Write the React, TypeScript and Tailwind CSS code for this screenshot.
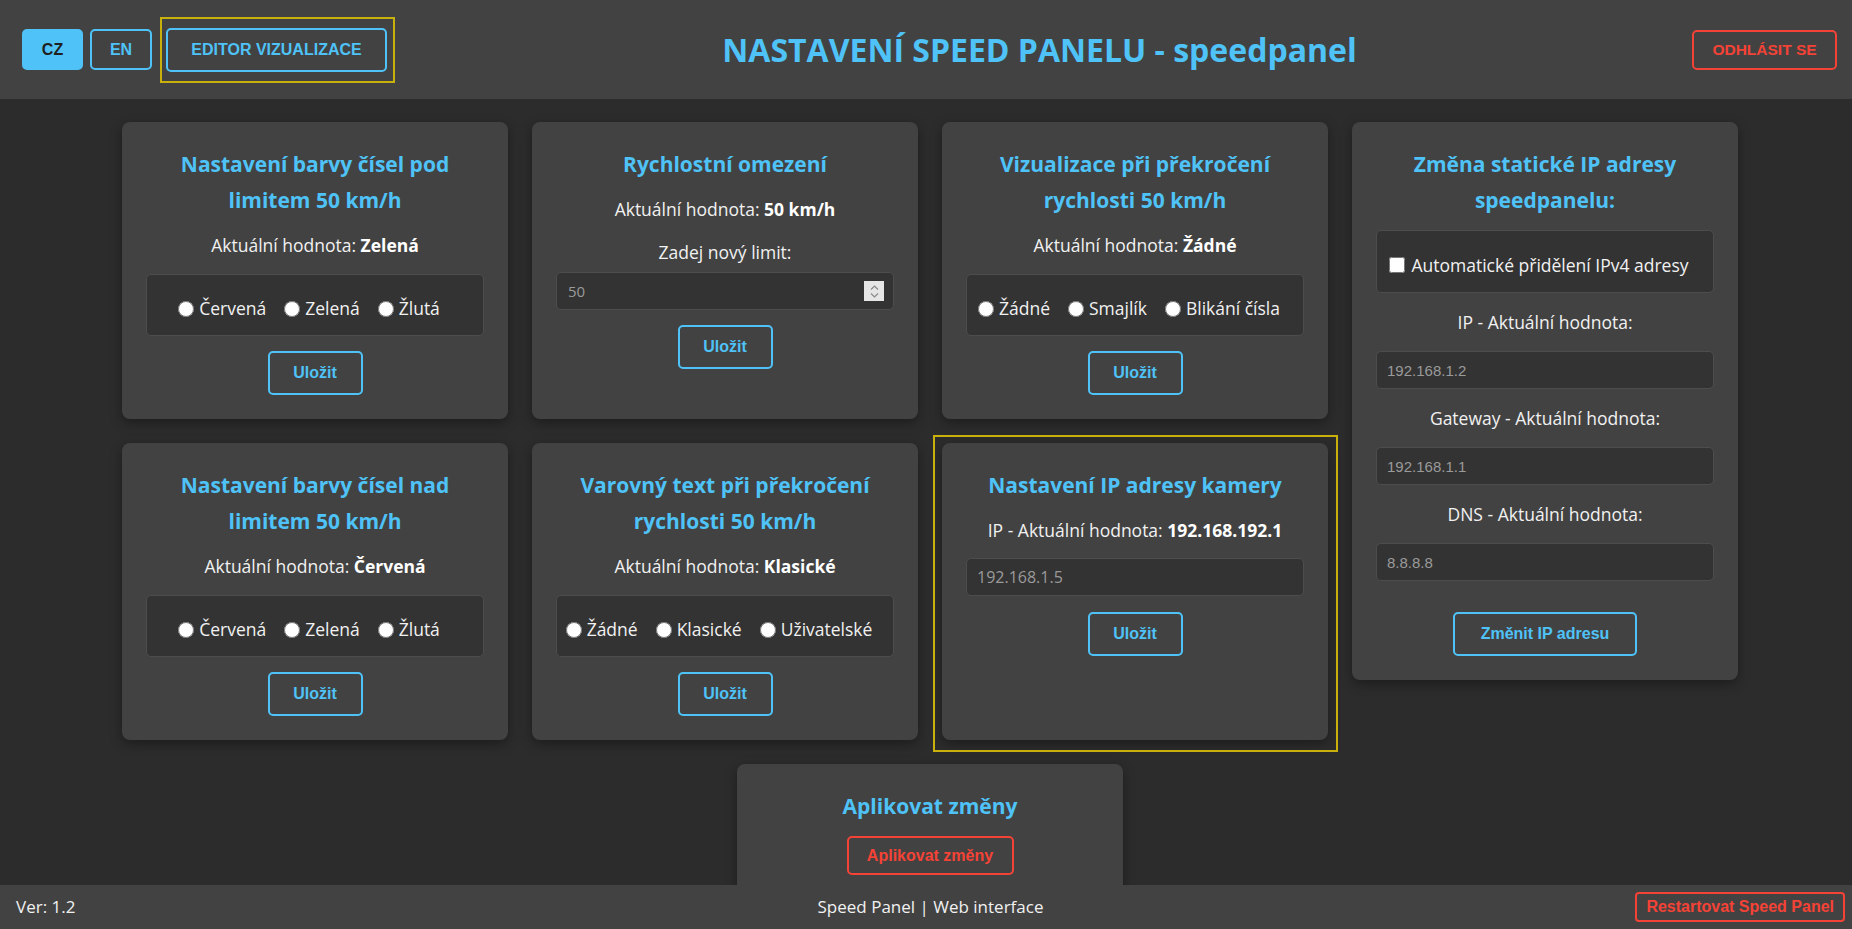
import React from 'react';

function Card({ children, className = '' }: { children: React.ReactNode; className?: string }) {
  return (
    <section
      className={`relative flex flex-col items-center rounded-lg bg-[#424242] p-6 text-center shadow-[0_4px_12px_rgba(0,0,0,0.35)] ${className}`}
    >
      {children}
    </section>
  );
}

function CardTitle({ children }: { children: React.ReactNode }) {
  return <h2 className="text-[21px] font-bold leading-[36px] text-[#4fc3f7]">{children}</h2>;
}

function Text({ children, className = '' }: { children: React.ReactNode; className?: string }) {
  return <p className={`text-[17.5px] leading-[27px] text-[#f1f1f1] ${className}`}>{children}</p>;
}

function RadioGroup({ name, options }: { name: string; options: string[] }) {
  return (
    <div className="mt-[15px] flex h-[62px] w-full items-center justify-center gap-[18px] rounded-[5px] border border-[#4d4d4d] bg-[#333333] pr-3 pt-[7px]">
      {options.map((o) => (
        <label key={o} className="flex items-center gap-[5px] text-[17.5px] text-[#f1f1f1]">
          <input type="radio" name={name} className="m-0 h-4 w-4" />
          {o}
        </label>
      ))}
    </div>
  );
}

function SaveButton({ className = 'mt-[15px]' }: { className?: string }) {
  return (
    <button
      className={`h-[44px] w-[95px] rounded-[5px] border-2 border-[#4fc3f7] font-['Liberation_Sans',Arial,sans-serif] text-[16px] font-bold text-[#4fc3f7] ${className}`}
    >
      Uložit
    </button>
  );
}

function IpInput({ value, className = '' }: { value: string; className?: string }) {
  return (
    <input
      type="text"
      placeholder={value}
      className={`h-[38px] w-full rounded-[5px] border border-[#4d4d4d] bg-[#333333] px-[10px] font-['Liberation_Sans',Arial,sans-serif] text-[15px] text-[#e0e0e0] outline-none placeholder:text-[#9a9a9a] ${className}`}
    />
  );
}

export default function App() {
  return (
    <div className="h-screen overflow-hidden bg-[#2c2c2c] font-['Open_Sans',sans-serif]">
      {/* Header */}
      <header className="flex h-[99px] items-center bg-[#424242] pl-[22px] pr-[15px]">
        <div className="flex items-center font-['Liberation_Sans',Arial,sans-serif] font-bold">
          <button className="h-[41px] w-[61px] rounded-[5px] bg-[#4fc3f7] text-[16px] text-[#1f1f1f]">CZ</button>
          <button className="ml-[7px] h-[41px] w-[62px] rounded-[5px] border-2 border-[#4fc3f7] text-[16px] text-[#4fc3f7]">
            EN
          </button>
          <button className="relative ml-[14px] h-[44px] w-[221px] rounded-[5px] border-2 border-[#4fc3f7] text-[16px] text-[#4fc3f7] before:pointer-events-none before:absolute before:-top-[13px] before:-bottom-[13px] before:-left-[8px] before:-right-[10px] before:border-2 before:border-[#c8b10c]">
            EDITOR VIZUALIZACE
          </button>
        </div>
        <h1 className="flex-1 text-center text-[32px] font-bold text-[#4fc3f7]">NASTAVENÍ SPEED PANELU - speedpanel</h1>
        <button className="h-[40px] w-[145px] rounded-[5px] border-2 border-[#f44336] font-['Liberation_Sans',Arial,sans-serif] text-[15.5px] font-bold text-[#f44336]">
          ODHLÁSIT SE
        </button>
      </header>

      <main className="pl-2 pt-[23px]">
        <div className="grid grid-cols-[repeat(4,386px)] justify-center gap-6">
          <Card>
            <CardTitle>Nastavení barvy čísel pod limitem 50 km/h</CardTitle>
            <Text className="mt-[14px]">
              Aktuální hodnota: <b className="font-bold text-white">Zelená</b>
            </Text>
            <RadioGroup name="under" options={['Červená', 'Zelená', 'Žlutá']} />
            <SaveButton />
          </Card>

          <Card>
            <CardTitle>Rychlostní omezení</CardTitle>
            <Text className="mt-[14px]">
              Aktuální hodnota: <b className="font-bold text-white">50 km/h</b>
            </Text>
            <Text className="mt-4">Zadej nový limit:</Text>
            <div className="relative mt-[6px] w-full">
              <input
                type="text"
                placeholder="50"
                className="h-[38px] w-full rounded-[5px] border border-[#4d4d4d] bg-[#333333] px-[11px] text-[15px] text-[#e0e0e0] outline-none placeholder:text-[#9a9a9a]"
              />
              <span className="pointer-events-none absolute right-[10px] top-1/2 flex h-[20px] w-[20px] -translate-y-1/2 flex-col items-center justify-center gap-[3px] bg-[#e6e6e6]">
                <svg width="9" height="5" viewBox="0 0 9 5">
                  <path d="M1 4.5 L4.5 1 L8 4.5" stroke="#8a8a8a" strokeWidth="1.2" fill="none" />
                </svg>
                <svg width="9" height="5" viewBox="0 0 9 5">
                  <path d="M1 0.5 L4.5 4 L8 0.5" stroke="#8a8a8a" strokeWidth="1.2" fill="none" />
                </svg>
              </span>
            </div>
            <SaveButton />
          </Card>

          <Card>
            <CardTitle>Vizualizace při překročení rychlosti 50 km/h</CardTitle>
            <Text className="mt-[14px]">
              Aktuální hodnota: <b className="font-bold text-white">Žádné</b>
            </Text>
            <RadioGroup name="visual" options={['Žádné', 'Smajlík', 'Blikání čísla']} />
            <SaveButton />
          </Card>

          <Card className="row-span-2 self-start">
            <CardTitle>Změna statické IP adresy speedpanelu:</CardTitle>
            <div className="mt-3 flex h-[63px] w-full items-center justify-center rounded-[5px] border border-[#4d4d4d] bg-[#333333] pr-3 pt-[7px]">
              <label className="flex items-center gap-[6px] text-[17.5px] text-[#f1f1f1]">
                <input type="checkbox" className="m-0 h-4 w-4" />
                Automatické přidělení IPv4 adresy
              </label>
            </div>
            <Text className="mt-4">IP - Aktuální hodnota:</Text>
            <IpInput value="192.168.1.2" className="mt-[15px]" />
            <Text className="mt-4">Gateway - Aktuální hodnota:</Text>
            <IpInput value="192.168.1.1" className="mt-[15px]" />
            <Text className="mt-4">DNS - Aktuální hodnota:</Text>
            <IpInput value="8.8.8.8" className="mt-[15px]" />
            <button className="mt-[31px] h-[44px] w-[184px] rounded-[5px] border-2 border-[#4fc3f7] font-['Liberation_Sans',Arial,sans-serif] text-[16px] font-bold text-[#4fc3f7]">
              Změnit IP adresu
            </button>
          </Card>

          <Card>
            <CardTitle>Nastavení barvy čísel nad limitem 50 km/h</CardTitle>
            <Text className="mt-[14px]">
              Aktuální hodnota: <b className="font-bold text-white">Červená</b>
            </Text>
            <RadioGroup name="over" options={['Červená', 'Zelená', 'Žlutá']} />
            <SaveButton />
          </Card>

          <Card>
            <CardTitle>Varovný text při překročení rychlosti 50 km/h</CardTitle>
            <Text className="mt-[14px]">
              Aktuální hodnota: <b className="font-bold text-white">Klasické</b>
            </Text>
            <RadioGroup name="warning" options={['Žádné', 'Klasické', 'Uživatelské']} />
            <SaveButton />
          </Card>

          <Card className="before:pointer-events-none before:absolute before:-top-[8px] before:-bottom-[12px] before:-left-[9px] before:-right-[10px] before:border-2 before:border-[#c8b10c]">
            <CardTitle>Nastavení IP adresy kamery</CardTitle>
            <Text className="mt-[14px]">
              IP - Aktuální hodnota: <b className="font-bold text-white">192.168.192.1</b>
            </Text>
            <input
              type="text"
              placeholder="192.168.1.5"
              className="mt-[14px] h-[38px] w-full rounded-[5px] border border-[#4d4d4d] bg-[#333333] px-[10px] text-[16px] text-[#e0e0e0] outline-none placeholder:text-[#9a9a9a]"
            />
            <SaveButton className="mt-4 h-[43px]" />
          </Card>
        </div>

        <div className="mt-6 flex justify-center">
          <Card className="w-[386px]">
            <CardTitle>Aplikovat změny</CardTitle>
            <button className="mt-3 h-[39px] w-[167px] rounded-[5px] border-2 border-[#f44336] font-['Liberation_Sans',Arial,sans-serif] text-[16px] font-bold text-[#f44336]">
              Aplikovat změny
            </button>
          </Card>
        </div>
      </main>

      {/* Footer */}
      <footer className="fixed bottom-0 left-0 right-0 grid h-[44px] grid-cols-[1fr_auto_1fr] items-center bg-[#424242] pl-4 pr-[7px] text-[17px] text-[#f1f1f1]">
        <span>Ver: 1.2</span>
        <span>Speed Panel | Web interface</span>
        <div className="flex justify-end">
          <button className="h-[30px] rounded-[4px] border-2 border-[#f44336] px-[9px] font-['Liberation_Sans',Arial,sans-serif] text-[16px] font-bold text-[#f44336]">
            Restartovat Speed Panel
          </button>
        </div>
      </footer>
    </div>
  );
}
